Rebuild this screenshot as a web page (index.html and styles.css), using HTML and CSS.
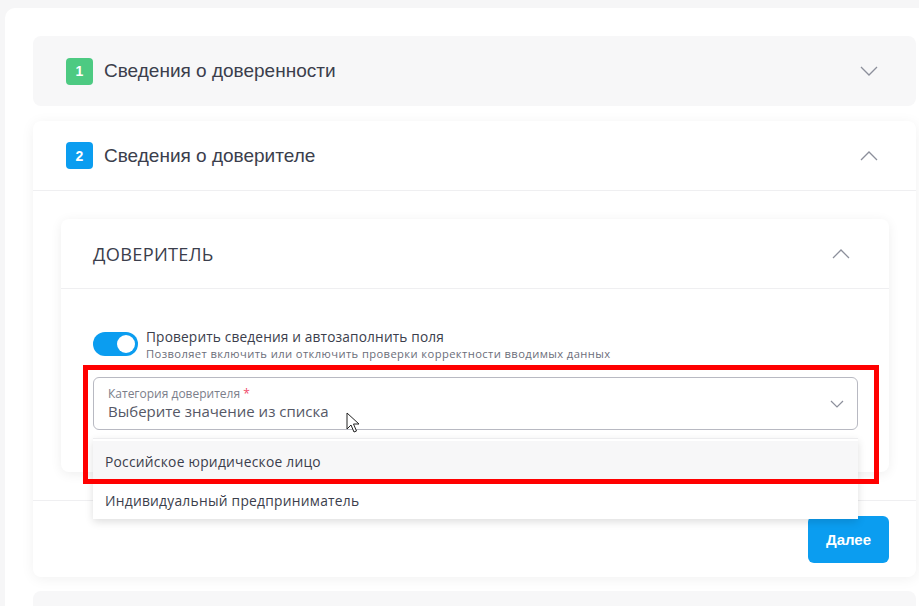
FILE: index.html
```html
<!DOCTYPE html>
<html lang="ru">
<head>
    <meta charset="UTF-8">
    <meta name="viewport" content="width=device-width, initial-scale=1.0">
    <title>Доверенность</title>
    <link rel="stylesheet" href="styles.css">
</head>
<body>
    <div class="page">
        <!-- Step 1, collapsed -->
        <section class="step step-collapsed">
            <div class="step-header">
                <span class="step-num num-green">1</span>
                <span class="step-title">Сведения о доверенности</span>
                <svg class="chevron" width="18" height="10" viewBox="0 0 18 10"><path d="M1 1l8 8 8-8" fill="none" stroke="#8c8f9b" stroke-width="1.3"/></svg>
            </div>
        </section>

        <!-- Step 2, expanded -->
        <section class="step step-open">
            <div class="step-header">
                <span class="step-num num-blue">2</span>
                <span class="step-title">Сведения о доверителе</span>
                <svg class="chevron" width="18" height="10" viewBox="0 0 18 10"><path d="M1 9l8-8 8 8" fill="none" stroke="#8c8f9b" stroke-width="1.3"/></svg>
            </div>
            <div class="step-body">
                <div class="panel">
                    <div class="panel-header">
                        <span class="panel-title">ДОВЕРИТЕЛЬ</span>
                        <svg class="chevron" width="18" height="10" viewBox="0 0 18 10"><path d="M1 9l8-8 8 8" fill="none" stroke="#8c8f9b" stroke-width="1.3"/></svg>
                    </div>
                    <div class="panel-body">
                        <div class="toggle-row">
                            <span class="toggle"><span class="knob"></span></span>
                            <div class="toggle-text">
                                <div class="toggle-label">Проверить сведения и автозаполнить поля</div>
                                <div class="toggle-hint">Позволяет включить или отключить проверки корректности вводимых данных</div>
                            </div>
                        </div>
                        <div class="select-wrap">
                            <div class="select">
                                <div class="select-text">
                                    <div class="select-label">Категория доверителя <span class="req">*</span></div>
                                    <div class="select-value">Выберите значение из списка</div>
                                </div>
                                <svg class="chevron" width="14" height="8" viewBox="0 0 14 8"><path d="M1 1l6 6 6-6" fill="none" stroke="#8c8f9b" stroke-width="1.2"/></svg>
                            </div>
                            <ul class="dropdown">
                                <li class="option active">Российское юридическое лицо</li>
                                <li class="option">Индивидуальный предприниматель</li>
                            </ul>
                            <!-- mouse pointer in the screenshot -->
                            <svg class="cursor" width="14" height="21" viewBox="0 0 14 21"><path d="M1 1v16l4-4 3 7 2.5-1-3-7h5.5z" fill="#fff" stroke="#222" stroke-width="1"/></svg>
                        </div>
                    </div>
                </div>
            </div>
            <div class="step-footer">
                <button class="next-button">Далее</button>
            </div>
        </section>

        <section class="step step-collapsed step-tail"></section>

        <!-- annotation frame -->
        <div class="highlight"></div>
    </div>
</body>
</html>
```

FILE: styles.css
```css
body {
    margin: 0;
    padding: 0;
    background-color: #f6f6f7;
    font-family: Inter, 'Noto Sans', sans-serif;
    color: #3b3e4c;
    overflow: hidden;
    height: 606px;
}

.page {
    position: relative;
    margin: 8px 0 0 5px;
    padding: 28px 3px 0 28px;
    background-color: #fff;
    border-radius: 10px 0 0 0;
    height: 598px;
    box-sizing: border-box;
    overflow: hidden;
    display: flex;
    flex-direction: column;
    gap: 15px;
}

.step {
    border-radius: 8px;
    flex-shrink: 0;
}

.step-collapsed {
    background-color: #f7f7f8;
}

.step-open {
    background-color: #fff;
    box-shadow: 0 2px 14px rgba(0, 0, 0, 0.06);
}

.step-tail {
    height: 40px;
    margin-top: -1px;
}

.step-header {
    display: flex;
    align-items: center;
    height: 70px;
    padding: 0 38px 0 33px;
}

.step-open .step-header {
    height: 69px;
    border-bottom: 1px solid #efeff1;
}

.step-num {
    width: 27px;
    height: 27px;
    border-radius: 4px;
    color: #fff;
    font-family: 'Liberation Sans', Arial, sans-serif;
    font-weight: bold;
    font-size: 14px;
    display: flex;
    align-items: center;
    justify-content: center;
    margin-right: 11px;
}

.num-green {
    background-color: #4dca82;
}

.num-blue {
    background-color: #0b9df0;
}

.step-title {
    font-family: 'Liberation Sans', Arial, sans-serif;
    font-size: 19px;
    flex: 1;
}

.step-body {
    padding: 28px 27px 28px 28px;
    border-bottom: 1px solid #efeff1;
}

.panel {
    border-radius: 8px;
    box-shadow: 0 2px 12px rgba(0, 0, 0, 0.07);
}

.panel-header {
    display: flex;
    align-items: center;
    height: 69px;
    padding: 0 39px 0 32px;
    border-bottom: 1px solid #efeff1;
}

.panel-title {
    flex: 1;
    font-family: 'Open Sans', sans-serif;
    font-size: 18.2px;
    letter-spacing: 0.3px;
}

.panel-body {
    padding: 42px 31px 42px 32px;
}

.toggle-row {
    display: flex;
    align-items: flex-start;
    gap: 8px;
    margin-bottom: 15px;
}

.toggle {
    width: 45px;
    height: 24px;
    border-radius: 12px;
    background-color: #0b9df0;
    position: relative;
    margin-top: 1px;
    flex-shrink: 0;
}

.knob {
    position: absolute;
    right: 3px;
    top: 3px;
    width: 18px;
    height: 18px;
    border-radius: 50%;
    background-color: #fff;
}

.toggle-text {
    margin-top: -4px;
}

.toggle-label {
    font-family: 'Open Sans', sans-serif;
    font-size: 13.7px;
    letter-spacing: 0.15px;
    line-height: 19px;
}

.toggle-hint {
    font-family: 'Open Sans', sans-serif;
    font-size: 11.2px;
    letter-spacing: 0.4px;
    color: #6b6e7a;
    line-height: 16px;
}

.select-wrap {
    position: relative;
}

.select {
    display: flex;
    align-items: center;
    height: 51px;
    border: 1px solid #b8b9c2;
    border-radius: 6px;
    padding: 0 13px 0 14px;
}

.select-text {
    flex: 1;
}

.select-label {
    font-family: 'Open Sans', sans-serif;
    font-size: 12px;
    color: #7b7e8a;
    line-height: 15px;
}

.req {
    color: #f04a6a;
}

.select-value {
    font-family: 'Open Sans', sans-serif;
    font-size: 15px;
    color: #555866;
    line-height: 20px;
}

.dropdown {
    position: absolute;
    left: 0;
    right: 0;
    top: 61px;
    margin: 0;
    padding: 2px 0 0;
    list-style: none;
    background-color: #fff;
    border-top: 1px solid #ececee;
    box-shadow: 0 3px 8px rgba(0, 0, 0, 0.13);
    z-index: 2;
}

.option {
    height: 40px;
    display: flex;
    align-items: center;
    padding: 0 12px;
    font-family: 'Open Sans', sans-serif;
    font-size: 13.8px;
    letter-spacing: 0.25px;
    color: #3b3e4c;
}

.option + .option {
    height: 38px;
}

.option.active {
    background-color: #f7f7f8;
}

.cursor {
    position: absolute;
    left: 253px;
    top: 35px;
    z-index: 3;
}

.step-footer {
    display: flex;
    justify-content: flex-end;
    padding: 15px 27px 14px;
}

.next-button {
    width: 81px;
    height: 47px;
    border: none;
    border-radius: 6px;
    background-color: #0b9df0;
    color: #fff;
    font-family: 'Liberation Sans', Arial, sans-serif;
    font-weight: bold;
    font-size: 15px;
    cursor: pointer;
}

.highlight {
    position: absolute;
    left: 78px;
    top: 357px;
    width: 786px;
    height: 109px;
    border: 5px solid #ff0000;
    z-index: 4;
    pointer-events: none;
}
```
